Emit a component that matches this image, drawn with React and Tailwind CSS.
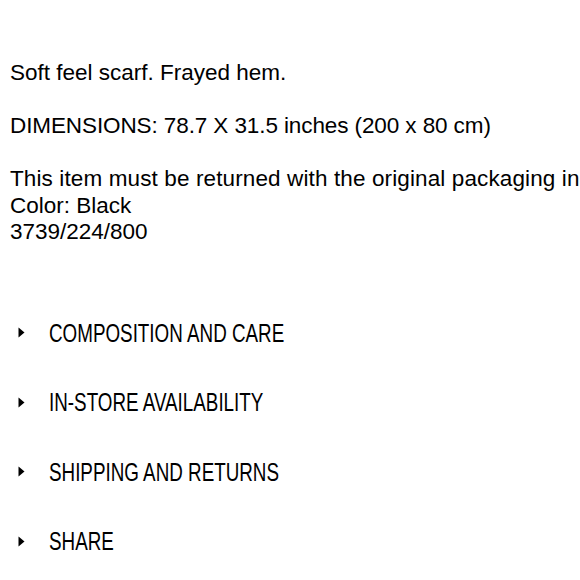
import React from 'react';

const sections = [
  'COMPOSITION AND CARE',
  'IN-STORE AVAILABILITY',
  'SHIPPING AND RETURNS',
  'SHARE',
];

const Caret = () => (
  <svg width="7" height="11" viewBox="0 0 7 11" className="shrink-0">
    <path d="M0.5 0.5 L6.5 5.5 L0.5 10.5 Z" fill="#000" />
  </svg>
);

export default function App() {
  return (
    <div className="w-[580px] h-[580px] overflow-hidden bg-white text-black">
      <div className="pt-[60px] px-[10px] text-[22.5px] leading-[26.5px] font-['Liberation_Sans',Arial,sans-serif] whitespace-nowrap">
        <p className="mb-[26.5px]">Soft feel scarf. Frayed hem.</p>
        <p className="mb-[26.5px] tracking-[-0.1px]">DIMENSIONS: 78.7 X 31.5 inches (200 x 80 cm)</p>
        <p>
          <span className="tracking-[0.12px]">This item must be returned with the original packaging in</span>
          <br />
          Color: Black
          <br />
          3739/224/800
        </p>
      </div>

      <ul className="mt-[52.5px]">
        {sections.map((s) => (
          <li key={s} className="h-[69.5px] flex items-center pl-[18px]">
            <Caret />
            <span className="ml-[24px] text-[26.5px] leading-none font-['Liberation_Sans',Arial,sans-serif] origin-left scale-x-[0.71] whitespace-nowrap">
              {s}
            </span>
          </li>
        ))}
      </ul>
    </div>
  );
}
